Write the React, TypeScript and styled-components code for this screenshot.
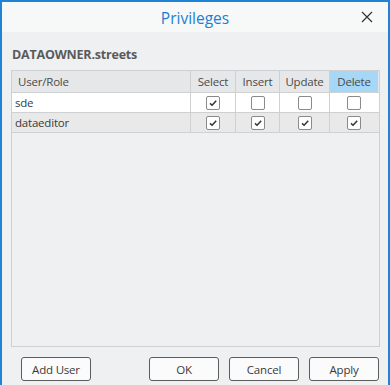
import React, { useState } from 'react';
import styled, { createGlobalStyle } from 'styled-components';

const GlobalStyle = createGlobalStyle`
  html, body {
    margin: 0;
    padding: 0;
    background: #ffffff;
  }
  * {
    box-sizing: border-box;
  }
`;

const colors = {
  frame: '#1f84d6',
  titleBg: '#f7f9f9',
  bodyBg: '#eff0f2',
  title: '#1c7fd1',
  text: '#3a3a3a',
  heading: '#5a5a5a',
  gridLine: '#cfd0d2',
  headerBg: '#e6e7e8',
  altRow: '#e9e9ea',
  selected: '#a6d7f7',
  buttonBorder: '#5c5c5c',
};

const Window = styled.div`
  width: 390px;
  height: 385px;
  display: flex;
  flex-direction: column;
  border: 2px solid ${colors.frame};
  border-bottom: none;
  background: ${colors.bodyBg};
  font-family: 'Open Sans', 'Noto Sans', sans-serif;
  color: ${colors.text};
  overflow: hidden;
`;

const TitleBar = styled.div`
  height: 30px;
  flex: none;
  display: grid;
  grid-template-columns: 1fr auto 1fr;
  align-items: center;
  background: ${colors.titleBg};
`;

const Title = styled.div`
  grid-column: 2;
  font-size: 15.5px;
  color: ${colors.title};
  padding-top: 2px;
`;

const CloseButton = styled.button`
  grid-column: 3;
  justify-self: end;
  margin-right: 13px;
  width: 16px;
  height: 16px;
  padding: 0;
  border: none;
  background: transparent;
  display: flex;
  align-items: center;
  justify-content: center;
  cursor: pointer;
`;

const Body = styled.div`
  flex: 1;
  display: flex;
  flex-direction: column;
  padding: 0 8px 0 9px;
`;

const Heading = styled.div`
  font-size: 12.5px;
  font-weight: bold;
  color: ${colors.heading};
  height: 38px;
  padding-top: 14px;
  padding-left: 1px;
  letter-spacing: -0.2px;
`;

const Grid = styled.div`
  height: 277px;
  border: 1px solid ${colors.gridLine};
  display: flex;
  flex-direction: column;
`;

const Row = styled.div<{ $bg: string; $height: number }>`
  display: grid;
  grid-template-columns: 178px 45px 44px 50px 49px;
  height: ${({ $height }) => $height}px;
  background: ${({ $bg }) => $bg};
  border-bottom: 1px solid ${colors.gridLine};
`;

const HeaderCell = styled.div<{ $active?: boolean; $first?: boolean }>`
  display: flex;
  align-items: center;
  justify-content: ${({ $first }) => ($first ? 'flex-start' : 'center')};
  padding-left: ${({ $first }) => ($first ? '6px' : '0')};
  border-left: ${({ $first }) => ($first ? 'none' : `1px solid ${colors.gridLine}`)};
  background: ${({ $active }) => ($active ? colors.selected : 'transparent')};
  font-size: 11.5px;
  color: #4a4a4a;
  letter-spacing: -0.2px;
`;

const NameCell = styled.div`
  display: flex;
  align-items: center;
  padding-left: 3px;
  font-size: 11.5px;
  color: ${colors.text};
  letter-spacing: -0.2px;
`;

const BoxCell = styled.div`
  display: flex;
  align-items: center;
  justify-content: center;
  border-left: 1px solid ${colors.gridLine};
`;

const Box = styled.span`
  width: 14px;
  height: 14px;
  border: 1px solid #8a8a8a;
  border-radius: 2px;
  background: #ffffff;
  display: flex;
  align-items: center;
  justify-content: center;
  cursor: pointer;
`;

const Footer = styled.div`
  height: 68px;
  flex: none;
  display: flex;
  align-items: flex-start;
  padding: 10px 9px 0 19px;
  gap: 10px;
`;

const Spacer = styled.div`
  flex: 1;
`;

const Button = styled.button`
  width: 70px;
  height: 24px;
  border: 1px solid ${colors.buttonBorder};
  border-radius: 3px;
  background: #fbfbfb;
  font-family: inherit;
  font-size: 11.5px;
  color: ${colors.text};
  letter-spacing: -0.2px;
  padding: 0;
  cursor: pointer;
`;

const columns = ['Select', 'Insert', 'Update', 'Delete'];

const initialRows = [
  { name: 'sde', perms: [true, false, false, false] },
  { name: 'dataeditor', perms: [true, true, true, true] },
];

const Check = () => (
  <svg width="10" height="10" viewBox="0 0 10 10">
    <path d="M2 5.4 L4.1 7.3 L8.2 2.8" fill="none" stroke="#333" strokeWidth="1.5" />
  </svg>
);

const CloseIcon = () => (
  <svg width="12" height="12" viewBox="0 0 12 12">
    <path d="M1 1 L11 11 M11 1 L1 11" stroke="#333" strokeWidth="1.2" />
  </svg>
);

const App = () => {
  const [rows, setRows] = useState(initialRows);

  const toggle = (rowIndex: number, colIndex: number) => {
    setRows(
      rows.map((row, i) =>
        i === rowIndex ? { ...row, perms: row.perms.map((p, j) => (j === colIndex ? !p : p)) } : row
      )
    );
  };

  return (
    <>
      <GlobalStyle />
      <Window>
        <TitleBar>
          <Title>Privileges</Title>
          <CloseButton aria-label="Close">
            <CloseIcon />
          </CloseButton>
        </TitleBar>
        <Body>
          <Heading>DATAOWNER.streets</Heading>
          <Grid>
            <Row $bg={colors.headerBg} $height={22}>
              <HeaderCell $first>User/Role</HeaderCell>
              {columns.map((col) => (
                <HeaderCell key={col} $active={col === 'Delete'}>
                  {col}
                </HeaderCell>
              ))}
            </Row>
            {rows.map((row, i) => (
              <Row key={row.name} $bg={i % 2 === 0 ? '#ffffff' : colors.altRow} $height={20}>
                <NameCell>{row.name}</NameCell>
                {row.perms.map((p, j) => (
                  <BoxCell key={j}>
                    <Box onClick={() => toggle(i, j)}>{p && <Check />}</Box>
                  </BoxCell>
                ))}
              </Row>
            ))}
          </Grid>
        </Body>
        <Footer>
          <Button>Add User</Button>
          <Spacer />
          <Button>OK</Button>
          <Button>Cancel</Button>
          <Button>Apply</Button>
        </Footer>
      </Window>
    </>
  );
};

export default App;
